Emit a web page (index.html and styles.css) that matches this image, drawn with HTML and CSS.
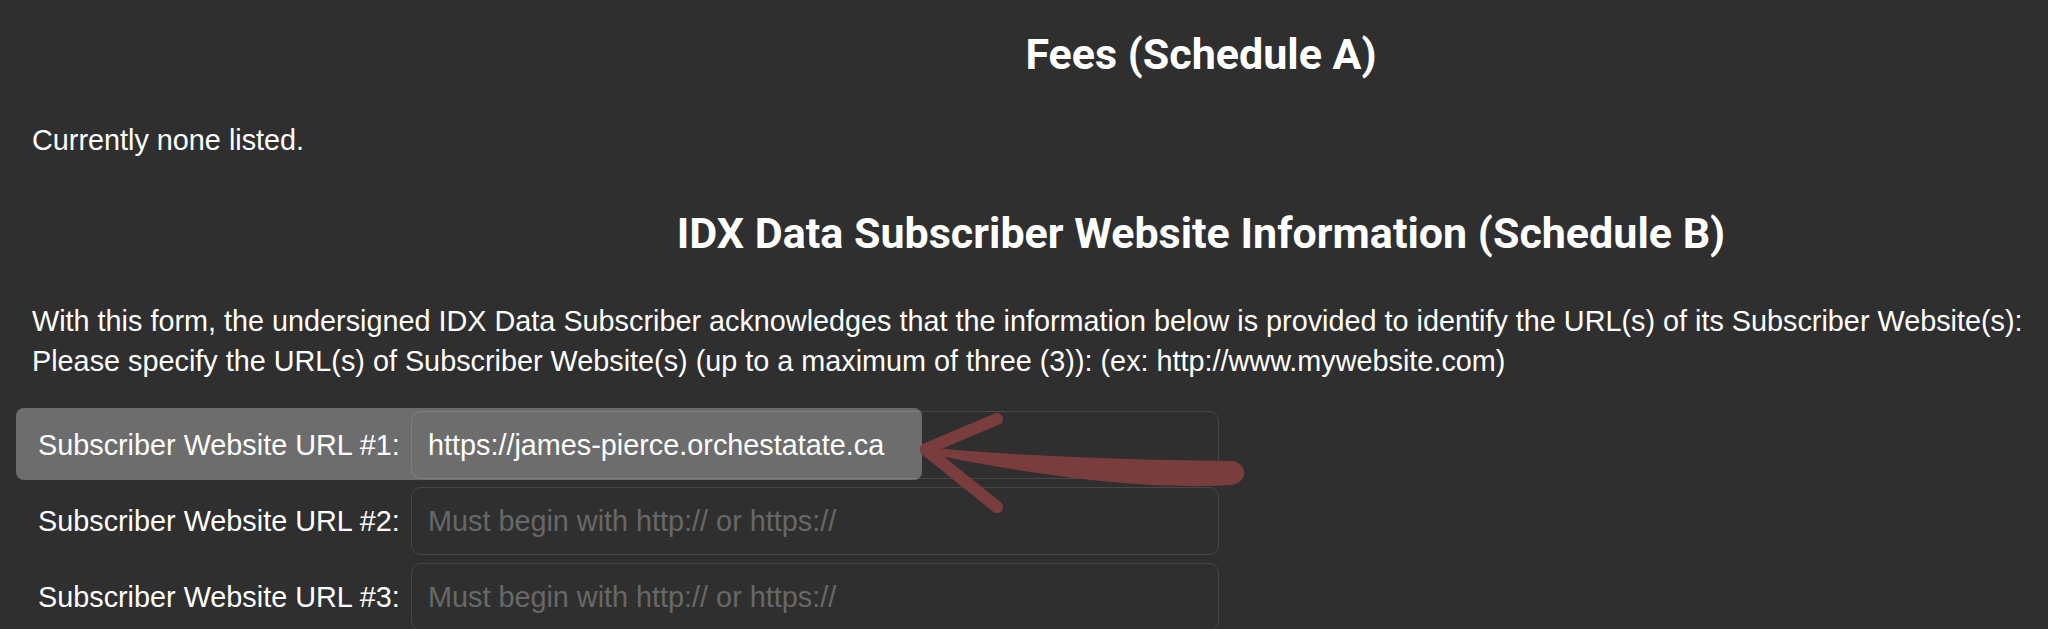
FILE: index.html
```html
<!DOCTYPE html>
<html lang="en">
<head>
<meta charset="utf-8">
<title>IDX Data Subscriber</title>
<link rel="stylesheet" href="styles.css">
</head>
<body>
<div class="page">
  <h2 class="section-title">Fees (Schedule A)</h2>
  <p class="note">Currently none listed.</p>
  <h2 class="section-title title-b">IDX Data Subscriber Website Information (Schedule B)</h2>
  <p class="intro">With this form, the undersigned IDX Data Subscriber acknowledges that the information below is provided to identify the URL(s) of its Subscriber Website(s):<br>Please specify the URL(s) of Subscriber Website(s) (up to a maximum of three (3)): (ex: http://www.mywebsite.com)</p>
  <div class="url-list">
    <div class="url-row">
      <label class="url-label" for="url1">Subscriber Website URL #1:</label>
      <input class="url-input" id="url1" type="text" value="https://james-pierce.orchestatate.ca" placeholder="Must begin with http:// or https://">
    </div>
    <div class="url-row">
      <label class="url-label" for="url2">Subscriber Website URL #2:</label>
      <input class="url-input" id="url2" type="text" placeholder="Must begin with http:// or https://">
    </div>
    <div class="url-row">
      <label class="url-label" for="url3">Subscriber Website URL #3:</label>
      <input class="url-input" id="url3" type="text" placeholder="Must begin with http:// or https://">
    </div>
    <div class="highlight"></div>
    <svg class="arrow" width="360" height="120" viewBox="0 0 360 120" aria-hidden="true">
      <path d="M25 46 C 80 52, 200 59, 330 60 C 348 60, 350 82, 330 84 C 260 89, 150 78, 25 52 Z" fill="#7a3d3d"/>
      <path d="M26 48 L 97 18" stroke="#7a3d3d" stroke-width="12" stroke-linecap="round" fill="none"/>
      <path d="M26 49 L 97 106" stroke="#7a3d3d" stroke-width="12" stroke-linecap="round" fill="none"/>
    </svg>
  </div>
</div>
</body>
</html>
```

FILE: styles.css
```css
html, body {
  margin: 0;
  padding: 0;
  background: #2f2f2f;
  overflow: hidden;
}

body {
  font-family: "Liberation Sans", Arial, sans-serif;
  color: #ffffff;
}

.page {
  width: 2338px;
  padding: 28px 0 0 32px;
}

.section-title {
  margin: 0;
  font-family: Roboto, "Liberation Sans", sans-serif;
  font-weight: 700;
  font-size: 43px;
  line-height: 52px;
  text-align: center;
  color: #ffffff;
}

.title-b {
  margin-top: 46px;
}

.note {
  margin: 39px 0 0;
  font-size: 28.8px;
  line-height: 42px;
}

.intro {
  margin: 42px 0 0;
  font-size: 28.8px;
  line-height: 40px;
}

.url-list {
  position: relative;
  margin-top: 30px;
  display: flex;
  flex-direction: column;
  gap: 8px;
}

.url-row {
  display: flex;
  align-items: center;
  height: 68px;
}

.url-label {
  flex: 0 0 379px;
  box-sizing: border-box;
  padding-left: 6px;
  font-size: 28.8px;
  line-height: 42px;
  color: #ffffff;
  white-space: nowrap;
}

.url-input {
  box-sizing: border-box;
  width: 808px;
  height: 68px;
  margin: 0;
  padding: 0 16px;
  border: 1px solid #474747;
  border-radius: 10px;
  background: transparent;
  font-family: "Liberation Sans", Arial, sans-serif;
  font-size: 28.8px;
  color: #ffffff;
  outline: none;
}

.url-input::placeholder {
  color: #686868;
}

.highlight {
  position: absolute;
  left: -16px;
  top: -3px;
  width: 906px;
  height: 72px;
  border-radius: 8px;
  background: rgba(255, 255, 255, 0.3);
  pointer-events: none;
}

.arrow {
  position: absolute;
  left: 868px;
  top: -10px;
  pointer-events: none;
}
```
